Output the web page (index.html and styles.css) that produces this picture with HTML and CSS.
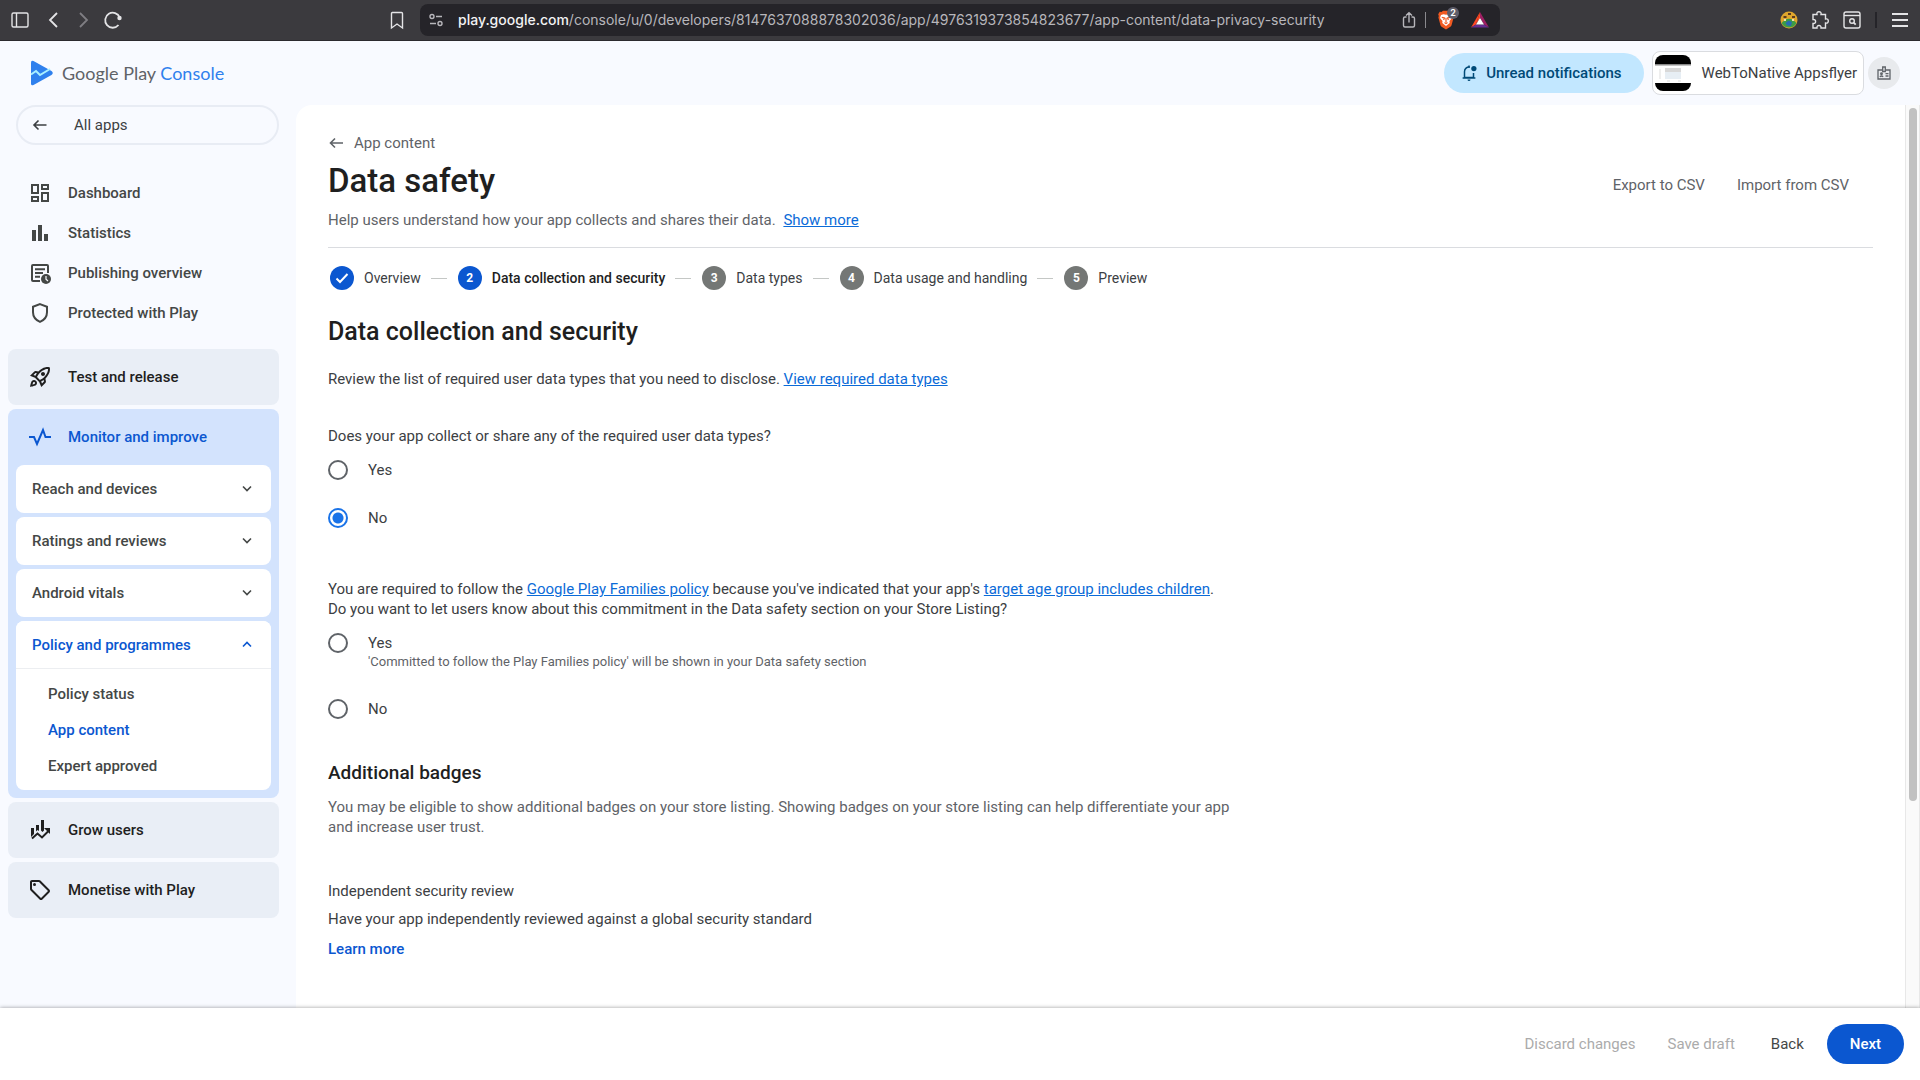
FILE: index.html
```html
<!DOCTYPE html>
<html lang="en-GB">
<head>
<meta charset="utf-8">
<title>Data safety | Google Play Console</title>
<link rel="stylesheet" href="styles.css">
</head>
<body>
<div class="browser">
  <div class="browser-nav">
    <button class="tool" aria-label="Toggle sidebar"><svg width="20" height="20" viewBox="0 0 20 20"><rect x="2" y="3" width="16" height="14" rx="1.500" class="line"/><path d="M6.500 3v14" class="line"/></svg></button>
    <button class="tool" aria-label="Back"><svg width="20" height="20" viewBox="0 0 20 20"><path d="M16 3l-7 7 7 7" class="line bold"/></svg></button>
    <button class="tool dim" aria-label="Forward"><svg width="20" height="20" viewBox="0 0 20 20"><path d="M8 3l7 7-7 7" class="line bold"/></svg></button>
    <button class="tool" aria-label="Reload"><svg width="20" height="20" viewBox="0 0 20 20"><path d="M15.500 15a7.500 7.500 0 1 1 1.200-7.500" class="line bold"/><circle cx="16.500" cy="8" r="2.200" fill="currentColor"/></svg></button>
  </div>
  <button class="tool bookmark" aria-label="Bookmark"><svg width="20" height="20" viewBox="0 0 20 20"><path d="M5 2.500h9.500q1 0 1 1V18l-5.500-4-5.500 4V3.500q0-1 1-1z" class="line"/></svg></button>
  <div class="address">
    <svg width="16" height="16" viewBox="0 0 16 16" class="site"><circle cx="4" cy="4.500" r="2" class="line"/><path d="M8 4.500h6M2 11.500h6" class="line"/><circle cx="12" cy="11.500" r="2" class="line"/></svg>
    <div class="url"><b>play.google.com</b>/console/u/0/developers/8147637088878302036/app/4976319373854823677/app-content/data-privacy-security</div>
    <button class="tool site" aria-label="Share"><svg width="18" height="18" viewBox="0 0 18 18"><path d="M6.500 6H5Q3.500 6 3.500 7.500v7Q3.500 16 5 16h8q1.500 0 1.500-1.500v-7Q14.500 6 13 6h-1.500M9 11.500V2M6 4.500L9 1.800l3 2.700" class="line"/></svg></button>
    <span class="sep"></span>
    <button class="tool shield" aria-label="Brave Shields"><svg width="18" height="20" viewBox="0 0 18 20"><path d="M4.500 2L6 .8h6L13.500 2l1.800-.2 1.500 2.400-.6 1.800.4 1.500-2 7.500q-.3 1-1.200 1.700L9 19.500l-4.400-2.800Q3.700 16 3.400 15l-2-7.500L1.800 6l-.6-1.800 1.500-2.400z" fill="#f15a22"/><path d="M4 5l2.500-.8L9 4.800l2.500-.6L14 5l1 3-2.500 3 .2 2L9 16l-3.700-3 .2-2L3 8z" fill="#fff"/><path d="M4.800 7.300l2.700.7-.9 2M13.200 7.300l-2.700.7.900 2M9 8v4M7.500 12.500L9 13.500l1.500-1" fill="none" stroke="#f15a22" stroke-width="1.200"/></svg><span class="count">2</span></button>
    <button class="tool" aria-label="Brave Rewards"><svg width="18" height="18" viewBox="0 0 18 18"><path d="M9 1L0 16.500 5 13.500z" fill="#ff4724"/><path d="M9 1v6l4 6.500 5 3z" fill="#9e1f63"/><path d="M0 16.500h18l-5-3H5z" fill="#662d91"/><path d="M9 1L5 13.500 9 7z" fill="#ff4724"/><path d="M9 7l-4 6.500h8z" fill="#fff"/></svg></button>
  </div>
  <div class="extensions">
    <button class="tool" aria-label="Extension"><svg width="18" height="18" viewBox="0 0 18 18"><circle cx="9" cy="9" r="8.500" fill="#dfa62c"/><path d="M1.500 12Q9 3.500 16.500 12A8.500 8.500 0 0 1 1.500 12z" fill="#3d9c46"/><path d="M5.500 12l3-2.500 3.500 1.500-1 4-4-.5z" fill="#276bb2"/><path d="M3.500 6h3M8 3h3M12 6h3" stroke="#5b3b21" stroke-width="2"/><path d="M4 9h2M12 9h2" stroke="#ece0b5" stroke-width="2"/></svg></button>
    <button class="tool" aria-label="Extensions"><svg width="20" height="20" viewBox="0 0 20 20"><path d="M3 4.500h4C6.500 2.500 7.500 1.800 9 1.800s2.500.7 2 2.700h4.500V9c2-.4 2.800.6 2.800 2s-.8 2.400-2.800 2v5H11c.2-1.700-.6-2.500-2-2.500s-2.200.8-2 2.500H3v-4.500c2 .2 2.600-.8 2.600-2S5 9.300 3 9.500z" class="line"/></svg></button>
    <button class="tool" aria-label="Search tabs"><svg width="20" height="20" viewBox="0 0 20 20"><rect x="2" y="2" width="16" height="16" rx="2" class="line"/><path d="M2 5.500h16" class="line"/><circle cx="10" cy="11" r="2.300" class="line"/><path d="M11.700 12.700l2 2" class="line bold"/></svg></button>
    <span class="sep dark"></span>
    <button class="tool" aria-label="Menu"><svg width="20" height="20" viewBox="0 0 20 20"><path d="M2 4h16M2 10h16M2 16h16" class="line bold"/></svg></button>
  </div>
</div>

<header class="header">
  <a class="brand" href="#">
    <svg width="24" height="26" viewBox="0 0 24 26"><path d="M1 2.500Q1-.2 3.500 1L21.500 11q2.500 2 0 4L3.500 25Q1 26.200 1 23.500z" fill="#2f80ed"/><path d="M1 14.500l5-3.500 4 4 10-6" fill="none" stroke="#a9efff" stroke-width="2"/></svg>
    <span class="brand-name">Google Play <span class="brand-product">Console</span></span>
  </a>
  <div class="header-actions">
    <button class="notify"><svg width="18" height="18" viewBox="0 0 24 24"><path d="M13 4.200a6 6 0 0 0-7 6V18h12v-6M3.500 18.500h17" fill="none" stroke="currentColor" stroke-width="2"/><path d="M10 20.500h4a2 2 0 0 1-4 0zM11 2h2v3h-2z" fill="currentColor"/><circle cx="18.500" cy="6" r="3.500" fill="currentColor"/></svg>Unread notifications</button>
    <button class="account">
      <svg class="thumb" width="36" height="36" viewBox="0 0 36 36"><path fill="#fff" d="M0 0h36v36H0z"/><path d="M0 0h36v9H0zM0 28h36v8H0z"/><path d="M0 9h36v1.500H0z" fill="#888"/><path d="M10 13h16v11H10z" fill="#e7eef4"/><path d="M10 13h16v4H10z" fill="#d8d8d8"/><path d="M5 14v10M12 26h3M23 26h3" stroke="#ddd"/></svg>
      WebToNative Appsflyer
    </button>
    <button class="badge" aria-label="Role"><svg width="16" height="16" viewBox="0 0 16 16" fill="none" stroke="currentColor" stroke-width="1.300"><path d="M6.500 5H2v9h12V5H9.500"/><path d="M6.700 2h2.600v4.500H6.700z"/><circle cx="5.500" cy="8.800" r=".8"/><path d="M3.800 11.700q1.700-1.400 3.400 0M9.500 8.700h3M9.500 11h3"/></svg></button>
  </div>
</header>

<div class="workspace">
  <nav class="sidebar" aria-label="Main">
    <a class="all-apps" href="#"><svg width="16" height="16" viewBox="0 0 16 16"><path d="M14.500 8H2.500M6.500 3.500L2 8l4.500 4.500" class="arrow"/></svg>All apps</a>
    <div class="links">
      <a class="link" href="#"><svg width="24" height="24" viewBox="0 0 24 24"><path fill="currentColor" d="M19 5v2h-4V5h4M9 5v6H5V5h4m10 8v6h-4v-6h4M9 17v2H5v-2h4M21 3h-8v6h8V3zM11 3H3v10h8V3zm10 8h-8v10h8V11zm-10 4H3v6h8v-6z"/></svg>Dashboard</a>
      <a class="link" href="#"><svg width="24" height="24" viewBox="0 0 24 24"><path fill="currentColor" d="M4 9h4v11H4zm12 4h4v7h-4zm-6-9h4v16h-4z"/></svg>Statistics</a>
      <a class="link" href="#"><svg width="24" height="24" viewBox="0 0 24 24"><path d="M12 20H5q-1 0-1-1V5q0-1 1-1h14q1 0 1 1v7M7 8.200h10M7 12h8M7 15.800h5" fill="none" stroke="currentColor" stroke-width="2"/><circle cx="18" cy="18" r="5" fill="currentColor"/><path d="M18 15v3.200l2 1.800" fill="none" stroke="#f8faff" stroke-width="1.200"/></svg>Publishing overview</a>
      <a class="link" href="#"><svg width="24" height="24" viewBox="0 0 24 24"><path d="M12 3.100l7 2.600v5.500q0 6.600-7 9.700-7-3.100-7-9.700V5.700z" fill="none" stroke="currentColor" stroke-width="2"/></svg>Protected with Play</a>
    </div>
    <div class="sections">
      <a class="section" href="#"><svg width="24" height="24" viewBox="0 0 24 24"><path fill="currentColor" d="M6 15c-.83 0-1.580.34-2.120.88C2.700 17.060 2 22 2 22s4.940-.7 6.120-1.880C8.660 19.580 9 18.830 9 18c0-1.660-1.340-3-3-3zm.71 3.710c-.28.28-2.170.76-2.170.76s.47-1.880.76-2.170c.17-.19.42-.3.7-.3.55 0 1 .45 1 1 0 .28-.11.53-.29.71zm10.710-5.060c6.360-6.360 4.240-11.310 4.240-11.310S16.710.22 10.350 6.580l-2.490-.5c-.65-.13-1.330.08-1.810.55L2 10.690l5 2.140L11.170 17l2.140 5 4.050-4.050c.47-.47.68-1.150.55-1.810l-.49-2.490zM7.410 10.830l-1.910-.82 1.970-1.970 1.440.29c-.57.83-1.080 1.700-1.500 2.500zm6.580 7.670l-.82-1.910c.8-.42 1.670-.93 2.490-1.500l.29 1.440-1.960 1.970zM16 12.240c-1.320 1.320-3.380 2.400-4.040 2.730l-2.930-2.930c.32-.65 1.400-2.710 2.730-4.040 4.680-4.680 8.230-3.990 8.230-3.990s.69 3.550-3.990 8.230zM15 11c1.100 0 2-.9 2-2s-.9-2-2-2-2 .9-2 2 .9 2 2 2z"/></svg>Test and release</a>
      <div class="section-open">
        <a class="section active" href="#"><svg width="24" height="24" viewBox="0 0 24 24"><path d="M1 12h5l3 7 6-14 2.500 7H23" fill="none" stroke="currentColor" stroke-width="2"/></svg>Monitor and improve</a>
        <div class="groups">
          <button class="group">Reach and devices<svg width="12" height="12" viewBox="0 0 12 12"><path d="M2 3.500l4 4 4-4" class="arrow"/></svg></button>
          <button class="group">Ratings and reviews<svg width="12" height="12" viewBox="0 0 12 12"><path d="M2 3.500l4 4 4-4" class="arrow"/></svg></button>
          <button class="group">Android vitals<svg width="12" height="12" viewBox="0 0 12 12"><path d="M2 3.500l4 4 4-4" class="arrow"/></svg></button>
          <div class="group-open">
            <button class="group active">Policy and programmes<svg width="12" height="12" viewBox="0 0 12 12"><path d="M2 7.500l4-4 4 4" class="arrow"/></svg></button>
            <div class="pages">
              <a class="page" href="#">Policy status</a>
              <a class="page active" href="#" aria-current="page">App content</a>
              <a class="page" href="#">Expert approved</a>
            </div>
          </div>
        </div>
      </div>
      <a class="section" href="#"><svg width="24" height="24" viewBox="0 0 24 24"><path fill="currentColor" d="M3 10h3v6l-3 3zM8 7h3v6l-1.500-1L8 13.500zM13 2h3v10.500L14.500 14 13 12.500z"/><path d="M4 20.500l5.500-5 4.500 4 6.500-6.500" fill="none" stroke="currentColor" stroke-width="2"/><path fill="currentColor" d="M16 10h6v6z"/></svg>Grow users</a>
      <a class="section" href="#"><svg width="24" height="24" viewBox="0 0 24 24"><path fill="currentColor" d="M21.410 11.580l-9-9C12.050 2.220 11.550 2 11 2H4c-1.100 0-2 .9-2 2v7c0 .55.22 1.050.59 1.420l9 9c.36.36.86.58 1.410.58s1.050-.22 1.410-.59l7-7c.37-.36.59-.86.59-1.410s-.23-1.060-.59-1.420zM13 20.010L4 11V4h7v-.01l9 9-7 7.020z"/><circle cx="6.500" cy="6.500" r="1.500" fill="currentColor"/></svg>Monetise with Play</a>
    </div>
  </nav>

  <main class="content">
    <a class="crumb" href="#"><svg width="16" height="16" viewBox="0 0 16 16"><path d="M15 8H3M7 3.500L2.500 8 7 12.500" class="arrow"/></svg>App content</a>
    <div class="title-row">
      <h1>Data safety</h1>
      <div class="title-actions"><button class="text-button">Export to CSV</button><button class="text-button">Import from CSV</button></div>
    </div>
    <p class="intro">Help users understand how your app collects and shares their data. <a class="inline-link more" href="#">Show more</a></p>

    <ol class="steps">
      <li class="step done"><span class="dot"><svg width="16" height="16" viewBox="0 0 16 16"><path d="M2.500 8.500L6 12l7.500-8" fill="none" stroke="#fff" stroke-width="2"/></svg></span>Overview</li>
      <li class="step current" aria-current="step"><span class="dot">2</span>Data collection and security</li>
      <li class="step"><span class="dot">3</span>Data types</li>
      <li class="step"><span class="dot">4</span>Data usage and handling</li>
      <li class="step"><span class="dot">5</span>Preview</li>
    </ol>

    <h2>Data collection and security</h2>
    <p class="review">Review the list of required user data types that you need to disclose. <a class="inline-link" href="#">View required data types</a></p>

    <fieldset class="question">
      <legend>Does your app collect or share any of the required user data types?</legend>
      <label class="option"><input type="radio" name="collect"><span>Yes</span></label>
      <label class="option"><input type="radio" name="collect" checked><span>No</span></label>
    </fieldset>

    <fieldset class="question">
      <legend>You are required to follow the <a class="inline-link" href="#">Google Play Families policy</a> because you've indicated that your app's <a class="inline-link" href="#">target age group includes children</a>.<br>Do you want to let users know about this commitment in the Data safety section on your Store Listing?</legend>
      <label class="option"><input type="radio" name="families"><span>Yes<small>'Committed to follow the Play Families policy' will be shown in your Data safety section</small></span></label>
      <label class="option"><input type="radio" name="families"><span>No</span></label>
    </fieldset>

    <h3>Additional badges</h3>
    <p class="badges">You may be eligible to show additional badges on your store listing. Showing badges on your store listing can help differentiate your app and increase user trust.</p>
    <h4>Independent security review</h4>
    <p class="standard">Have your app independently reviewed against a global security standard</p>
    <a class="learn" href="#">Learn more</a>
  </main>
  <div class="scrollbar"><div class="scroll-thumb"></div></div>
</div>

<footer class="footer">
  <button class="text-button" disabled>Discard changes</button>
  <button class="text-button" disabled>Save draft</button>
  <button class="text-button back">Back</button>
  <button class="next">Next</button>
</footer>
</body>
</html>
```
FILE: styles.css
```css
* { box-sizing: border-box; }
body {
  margin: 0;
  height: 100vh;
  display: flex;
  flex-direction: column;
  overflow: hidden;
  background: #f8faff;
  color: #3c4043;
  font: 15px/20px Roboto, sans-serif;
}
button { border: 0; margin: 0; padding: 0; background: none; color: inherit; font: inherit; cursor: pointer; }
a { color: inherit; text-decoration: none; }
h1, h2, h3, h4, p, ol, fieldset { margin: 0; padding: 0; border: 0; }
svg { flex: none; display: block; }
.line { fill: none; stroke: currentColor; stroke-width: 1.400; }
.line.bold { stroke-width: 1.800; }
.arrow { fill: none; stroke: currentColor; stroke-width: 1.600; }

/* Browser toolbar */
.browser {
  flex: none;
  display: flex;
  align-items: center;
  height: 41px;
  padding: 0 10px;
  background: #3b3a3e;
  border-bottom: 1px solid #2b2a2e;
  color: #e4e4e6;
}
.browser-nav { display: flex; gap: 11px; flex: 0 0 376px; }
.tool { position: relative; display: flex; align-items: center; }
.tool.dim { color: #7f7e83; }
.bookmark { margin: 0 14px 0 1px; }
.address {
  flex: 0 1 1080px;
  display: flex;
  align-items: center;
  height: 32px;
  margin-left: -1px;
  padding: 0 11px 0 8px;
  border-radius: 8px;
  background: #252429;
}
.site { color: #b7b6bb; }
.url { flex: 1; margin-left: 14px; font: 14px/20px Inter, sans-serif; color: #b7b6bb; white-space: nowrap; overflow: hidden; }
.url b { font-weight: 500; color: #f2f2f4; }
.sep { width: 1px; height: 16px; margin: 0 11px 0 7px; background: #8a898e; }
.sep.dark { width: 2px; margin: 0 1px; background: #252429; }
.shield { margin-right: 16px; }
.count {
  position: absolute;
  top: -3px;
  left: 10px;
  width: 12px;
  height: 12px;
  border-radius: 6px;
  background: #5f5e6a;
  color: #fff;
  font: 600 9px/12px Inter, sans-serif;
  text-align: center;
}
.extensions { display: flex; align-items: center; gap: 12px; margin-left: auto; }

/* App header */
.header { flex: none; display: flex; align-items: center; justify-content: space-between; height: 64px; padding: 0 20px 0 30px; }
.brand { display: flex; align-items: center; gap: 8px; }
.brand-name { font: 18px/24px Lato, sans-serif; color: #5f6368; }
.brand-product { color: #2f80ed; }
.header-actions { display: flex; align-items: center; }
.notify { display: flex; align-items: center; gap: 8px; height: 40px; padding: 0 22px 0 16px; border-radius: 20px; background: #c2e7ff; color: #004a77; font-weight: 500; }
.account { display: flex; align-items: center; gap: 11px; height: 44px; margin: 0 4px 0 8px; padding: 0 6px 0 2px; border: 1px solid #dadce0; border-radius: 8px; background: #fff; }
.thumb { border-radius: 8px; }
.badge { display: grid; place-items: center; width: 32px; height: 32px; border-radius: 16px; background: #e8eaed; color: #5f6368; }

.workspace { flex: 1; min-height: 0; display: flex; }

/* Navigation */
.sidebar { flex: none; width: 296px; padding: 0 17px 0 8px; font-weight: 500; }
.all-apps { display: flex; align-items: center; gap: 26px; height: 40px; margin: 0 0 0 8px; padding: 0 14px; border: 2px solid #e8ecf4; border-radius: 20px; font-weight: 400; }
.links { margin: 28px 0 16px; }
.link, .section { display: flex; align-items: center; gap: 16px; padding: 0 20px; }
.link { height: 40px; color: #444746; }
.sections { display: flex; flex-direction: column; gap: 4px; }
.section { height: 56px; border-radius: 8px; background: #e9eef6; color: #1f1f1f; }
.section-open { padding-bottom: 8px; border-radius: 8px; background: #d3e3fd; }
.section.active { background: none; }
.active { color: #0b57d0; }
.section.active { color: #0b57d0; }
.groups { display: flex; flex-direction: column; gap: 4px; padding: 0 8px; }
.group { display: flex; align-items: center; justify-content: space-between; width: 100%; height: 48px; padding: 0 18px 0 16px; border-radius: 8px; background: #fff; color: #444746; }
.group-open { border-radius: 8px; background: #fff; }
.group.active { color: #0b57d0; border-bottom: 1px solid #eceef1; border-radius: 8px 8px 0 0; }
.pages { display: flex; flex-direction: column; padding: 7px 0 6px; }
.page { padding: 8px 32px; color: #444746; }
.page.active { color: #0b57d0; }

/* Page content */
.content { flex: 1; min-width: 0; overflow: hidden; padding: 28px 32px 0; border-radius: 16px 0 0 0; background: #fff; }
.crumb { display: inline-flex; align-items: center; gap: 10px; color: #5f6368; vertical-align: top; }
.title-row { display: flex; align-items: center; justify-content: space-between; margin-top: 8px; }
h1 { font: 500 33px/40px Roboto, sans-serif; color: #1f1f1f; }
.title-actions { display: flex; gap: 32px; padding: 8px 24px 0 0; }
.text-button { color: #5f6368; }
.intro { margin-top: 9px; padding-bottom: 17px; border-bottom: 1px solid #dadce0; color: #5f6368; }
.inline-link { color: #0b6bd8; text-decoration: underline; }
.more { margin-left: 4px; }
.steps { display: flex; align-items: center; gap: 11px; padding: 18px 2px; list-style: none; font-size: 14px; }
.step { display: flex; align-items: center; gap: 10px; }
.step:not(:last-child)::after { content: ""; width: 16px; height: 1px; background: #c4c7c5; }
.dot { display: grid; place-items: center; width: 24px; height: 24px; border-radius: 12px; background: #747775; color: #fff; font-size: 12px; font-weight: 700; }
.done .dot, .current .dot { background: #0b57d0; }
.current { color: #1f1f1f; font-weight: 500; }
h2 { margin-top: 8px; font: 500 25px/32px Roboto, sans-serif; color: #1f1f1f; }
.review { margin-top: 21px; }
.question { margin-top: 37px; max-width: 920px; }
.question + .question { margin-top: 33px; }
legend { padding: 0 0 4px; }
.option { display: flex; align-items: flex-start; gap: 20px; padding: 10px 0 18px; }
.option input {
  appearance: none;
  flex: none;
  width: 20px;
  height: 20px;
  margin: 0;
  border: 2px solid #5f6368;
  border-radius: 10px;
}
.option input:checked { border-color: #1a73e8; background: radial-gradient(#1a73e8 5px, #fff 6px); }
small { display: block; font-size: 13px; line-height: 18px; color: #5f6368; }
h3 { margin-top: 24px; font: 500 19px/24px Roboto, sans-serif; color: #1f1f1f; }
.badges { max-width: 920px; margin-top: 12px; color: #5f6368; }
h4 { margin-top: 44px; font-size: 15px; font-weight: 400; }
.standard { margin-top: 8px; }
.learn { display: inline-block; margin-top: 10px; color: #0b57d0; font-weight: 500; }

.scrollbar { flex: none; width: 15px; padding: 3px 3px 0; background: #fafafa; border: 1px solid #e8e8e8; border-width: 0 1px; }
.scroll-thumb { width: 8px; height: 77%; border-radius: 4px; background: #c1c1c1; }

.footer {
  position: relative;
  flex: none;
  display: flex;
  align-items: center;
  justify-content: flex-end;
  gap: 32px;
  height: 72px;
  padding: 0 16px;
  background: #fff;
  box-shadow: 0 0 4px rgba(0, 0, 0, .4);
}
.footer .text-button:disabled { color: #ababab; cursor: default; }
.footer .back { margin-left: 4px; color: #444746; }
.next { margin-left: -9px; height: 40px; padding: 0 23px; border-radius: 20px; background: #0b57d0; color: #fff; font-weight: 500; }
```
